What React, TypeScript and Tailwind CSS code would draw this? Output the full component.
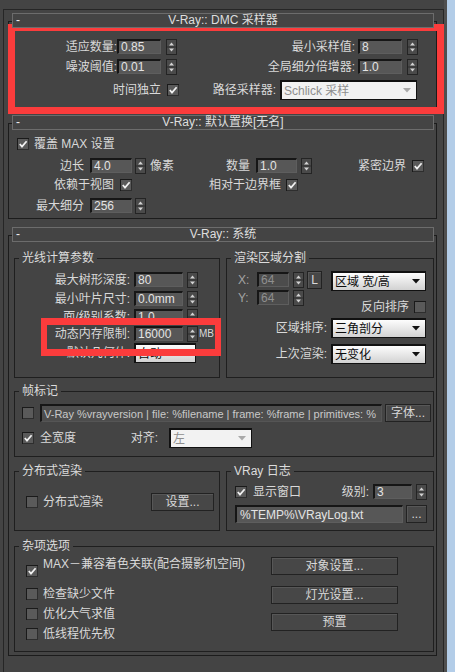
import type { ReactNode } from "react";

const FONT = "font-['Liberation_Sans','Noto_Sans_CJK_SC',sans-serif]";

function Field({
  className = "",
  value,
  dim = false,
}: {
  className?: string;
  value: string;
  dim?: boolean;
}) {
  return (
    <div
      className={`flex h-[15px] shrink-0 items-center overflow-hidden whitespace-nowrap border-t-2 border-l-2 border-r border-b border-t-[#161616] border-l-[#161616] border-r-[#5e5e5e] border-b-[#5e5e5e] pl-[2px] ${
        dim ? "bg-[#4c4c4c] text-[#8f8f8f]" : "bg-[#575757] text-[#e4e4e4]"
      } ${className}`}
    >
      {value}
    </div>
  );
}

function Spin({ className = "" }: { className?: string }) {
  return (
    <svg width="11" height="16" viewBox="0 0 11 16" className={`shrink-0 ${className}`}>
      <rect x="0.5" y="0.5" width="10" height="15" fill="#4a4a4a" stroke="#242424" />
      <line x1="1" y1="8" x2="10" y2="8" stroke="#2c2c2c" />
      <path d="M5.5 3.5 L8 6.5 L3 6.5 Z" fill="#d2d2d2" />
      <path d="M3 9.5 L8 9.5 L5.5 12.5 Z" fill="#d2d2d2" />
    </svg>
  );
}

function Check({ on = false, className = "" }: { on?: boolean; className?: string }) {
  return (
    <svg width="12" height="12" viewBox="0 0 12 12" className={`shrink-0 ${className}`}>
      <rect x="0" y="0" width="12" height="12" fill="#5a5a5a" />
      <path d="M0 0H12V1H1V12H0Z" fill="#1a1a1a" />
      <path d="M11 1H12V12H1V11H11Z" fill="#2e2e2e" />
      {on && (
        <path d="M2.8 6 L5 8.6 L9.6 3.2" stroke="#f2f2f2" strokeWidth="1.7" fill="none" />
      )}
    </svg>
  );
}

function Select({
  className = "",
  text,
  muted = false,
}: {
  className?: string;
  text: string;
  muted?: boolean;
}) {
  return (
    <div
      className={`flex h-[20px] shrink-0 items-center justify-between border-t-2 border-l-2 border-r border-b border-[#111] pl-[2px] pr-[5px] ${
        muted
          ? "bg-[#f2f2f2] text-[#8e8e8e]"
          : "bg-linear-to-b from-[#fdfdfd] to-[#d2d2d2] text-[#0c0c0c]"
      } ${className}`}
    >
      <span className="whitespace-nowrap">{text}</span>
      <svg width="8" height="5" viewBox="0 0 8 5" className="shrink-0">
        <path d="M0 0 H8 L4 4.5 Z" fill={muted ? "#a9a9a9" : "#111"} />
      </svg>
    </div>
  );
}

function Btn({ className = "", children }: { className?: string; children: ReactNode }) {
  return (
    <div
      className={`flex h-[18px] shrink-0 items-center justify-center border border-[#222] bg-[#474747] text-[#d8d8d8] shadow-[inset_1px_1px_0_#575757] ${className}`}
    >
      {children}
    </div>
  );
}

function Group({
  title,
  className = "",
  children,
}: {
  title: string;
  className?: string;
  children: ReactNode;
}) {
  return (
    <div className={`shrink-0 border border-[#1f1f1f] ${className}`}>
      <div className="-mt-[8px] ml-[4px] w-fit bg-[#444] px-[3px] leading-[14px] text-[#dcdcdc]">
        {title}
      </div>
      {children}
    </div>
  );
}

function Rollout({
  title,
  className = "",
  bodyClass,
  children,
}: {
  title: string;
  className?: string;
  bodyClass: string;
  children: ReactNode;
}) {
  return (
    <div className={className}>
      <div className="relative z-10 ml-[8px] grid h-[15px] w-[422px] grid-cols-[20px_1fr_20px] items-center border border-[#6c6c6c] bg-[#444] leading-[13px]">
        <span className="pl-[3px] text-[#f0f0f0]">-</span>
        <span className="text-center text-[#dedede]">{title}</span>
        <span />
      </div>
      <div className={`-mt-[7px] ml-[4px] w-[429px] border border-[#1c1c1c] ${bodyClass}`}>
        {children}
      </div>
    </div>
  );
}

export default function App() {
  return (
    <div
      className={`${FONT} relative flex h-[672px] w-[455px] overflow-hidden bg-[#444] text-[12px] leading-[14px] text-[#d9d9d9]`}
    >
      <div className="h-full w-[444px] shrink-0 pl-[3px] pt-[9px]">
        <div className="h-full border-t border-l border-r border-[#262626] pt-[3px]">
          {/* DMC sampler */}
          <Rollout title="V-Ray:: DMC 采样器" bodyClass="h-[87px]">
            <div className="mt-[17px] flex h-[15px] items-center">
              <span className="w-[108px] text-right">适应数量:</span>
              <Field className="w-[44px]" value="0.85" />
              <Spin className="ml-[5px]" />
              <span className="w-[178px] text-right">最小采样值:</span>
              <Field className="ml-[3px] w-[44px]" value="8" />
              <Spin className="ml-[5px]" />
            </div>
            <div className="mt-[5px] flex h-[15px] items-center">
              <span className="w-[108px] text-right">噪波阈值:</span>
              <Field className="w-[44px]" value="0.01" />
              <Spin className="ml-[5px]" />
              <span className="w-[178px] text-right">全局细分倍增器:</span>
              <Field className="ml-[3px] w-[44px]" value="1.0" />
              <Spin className="ml-[5px]" />
            </div>
            <div className="mt-[6px] flex h-[20px] items-center">
              <span className="w-[152px] text-right">时间独立</span>
              <Check on className="ml-[6px]" />
              <span className="w-[97px] text-right">路径采样器:</span>
              <Select className="ml-[4px] w-[137px]" muted text="Schlick 采样" />
            </div>
          </Rollout>

          {/* displacement */}
          <Rollout title="V-Ray:: 默认置换[无名]" className="mt-[7px]" bodyClass="h-[96px]">
            <div className="mt-[14px] flex h-[12px] items-center">
              <Check on className="ml-[8px]" />
              <span className="ml-[5px]">覆盖 MAX 设置</span>
            </div>
            <div className="mt-[8px] flex h-[15px] items-center">
              <span className="w-[75px] text-right">边长</span>
              <Field className="ml-[6px] w-[42px]" value="4.0" />
              <Spin className="ml-[3px]" />
              <span className="ml-[4px] w-[24px]">像素</span>
              <span className="w-[76px] text-right">数量</span>
              <Field className="ml-[6px] w-[41px]" value="1.0" />
              <Spin className="ml-[4px]" />
              <span className="w-[94px] text-right">紧密边界</span>
              <Check on className="ml-[6px]" />
            </div>
            <div className="mt-[6px] flex h-[12px] items-center">
              <span className="w-[105px] text-right">依赖于视图</span>
              <Check on className="ml-[6px]" />
              <span className="w-[149px] text-right">相对于边界框</span>
              <Check on className="ml-[5px]" />
            </div>
            <div className="mt-[7px] flex h-[15px] items-center">
              <span className="w-[75px] text-right">最大细分</span>
              <Field className="ml-[6px] w-[42px]" value="256" />
              <Spin className="ml-[3px]" />
            </div>
          </Rollout>

          {/* system */}
          <Rollout title="V-Ray:: 系统" className="mt-[8px]" bodyClass="h-[421px]">
            <div className="mt-[22px] flex items-start">
              <Group title="光线计算参数" className="ml-[5px] h-[120px] w-[206px]">
                {[
                  ["最大树形深度:", "80", "mt-[7px]"],
                  ["最小叶片尺寸:", "0.0mm", "mt-[4px]"],
                  ["面/级别系数:", "1.0", "mt-[3px]"],
                  ["动态内存限制:", "16000", "mt-[2px]"],
                ].map(([label, value, gap]) => (
                  <div key={label} className={`${gap} flex h-[15px] items-center`}>
                    <span className="w-[115px] text-right">{label}</span>
                    <Field className="ml-[4px] w-[49px]" value={value} />
                    <Spin className="ml-[4px]" />
                    {value === "16000" && <span className="ml-[1px] text-[10px]">MB</span>}
                  </div>
                ))}
                <div className="mt-[2px] flex h-[20px] items-center">
                  <span className="w-[115px] text-right">默认几何体:</span>
                  <Select className="ml-[4px] w-[62px]" text="自动" />
                </div>
              </Group>

              <Group title="渲染区域分割" className="ml-[6px] h-[120px] w-[208px]">
                <div className="mt-[6px] flex items-start">
                  <div className="w-[95px]">
                    <div className="mt-[1px] flex h-[15px] items-center">
                      <span className="w-[30px] pl-[11px] text-[#a3a3a3]">X:</span>
                      <Field dim className="w-[32px]" value="64" />
                      <Spin className="ml-[4px]" />
                      <Btn className="ml-[3px] h-[16px] w-[15px] text-[#bdbdbd]">L</Btn>
                    </div>
                    <div className="mt-[3px] flex h-[15px] items-center">
                      <span className="w-[30px] pl-[11px] text-[#a3a3a3]">Y:</span>
                      <Field dim className="w-[32px]" value="64" />
                      <Spin className="ml-[4px]" />
                    </div>
                  </div>
                  <div className="ml-[9px] w-[95px]">
                    <Select className="w-[95px]" text="区域 宽/高" />
                    <div className="mt-[10px] flex h-[12px] items-center justify-end">
                      <span>反向排序</span>
                      <Check className="ml-[5px]" />
                    </div>
                  </div>
                </div>
                <div className="mt-[5px] flex h-[20px] items-center">
                  <span className="w-[100px] text-right">区域排序:</span>
                  <Select className="ml-[4px] w-[95px]" text="三角剖分" />
                </div>
                <div className="mt-[6px] flex h-[20px] items-center">
                  <span className="w-[100px] text-right">上次渲染:</span>
                  <Select className="ml-[4px] w-[95px]" text="无变化" />
                </div>
              </Group>
            </div>

            <Group title="帧标记" className="mt-[13px] ml-[5px] h-[66px] w-[420px]">
              <div className="mt-[6px] flex h-[18px] items-center">
                <Check className="ml-[7px]" />
                <div className="ml-[6px] flex h-[18px] w-[342px] items-center overflow-hidden whitespace-nowrap border-t-2 border-l-2 border-r border-b border-t-[#161616] border-l-[#161616] border-r-[#555] border-b-[#555] bg-[#4d4d4d] pl-[2px] text-[11px] text-[#c9c9c9]">
                  V-Ray %vrayversion | file: %filename | frame: %frame | primitives: %
                </div>
                <Btn className="ml-[3px] w-[46px]">字体...</Btn>
              </div>
              <div className="mt-[6px] flex h-[20px] items-center">
                <Check on className="ml-[7px]" />
                <span className="ml-[6px] w-[36px]">全宽度</span>
                <span className="w-[82px] text-right">对齐:</span>
                <Select className="ml-[11px] w-[83px]" muted text="左" />
              </div>
            </Group>

            <div className="mt-[14px] flex items-start">
              <Group title="分布式渲染" className="ml-[5px] h-[60px] w-[206px]">
                <div className="mt-[15px] flex h-[18px] items-center">
                  <Check className="ml-[11px]" />
                  <span className="ml-[5px] w-[60px]">分布式渲染</span>
                  <Btn className="ml-[48px] w-[63px]">设置...</Btn>
                </div>
              </Group>
              <Group title="VRay 日志" className="ml-[6px] h-[60px] w-[208px]">
                <div className="mt-[6px] flex h-[15px] items-center">
                  <Check on className="ml-[8px]" />
                  <span className="ml-[6px] w-[48px]">显示窗口</span>
                  <span className="w-[68px] text-right">级别:</span>
                  <Field className="ml-[4px] w-[39px]" value="3" />
                  <Spin className="ml-[4px]" />
                </div>
                <div className="mt-[6px] flex h-[18px] items-center">
                  <Field className="ml-[8px] !h-[18px] w-[168px] pl-[3px]" value="%TEMP%\VRayLog.txt" />
                  <Btn className="ml-[3px] w-[21px]">...</Btn>
                </div>
              </Group>
            </div>

            <Group title="杂项选项" className="mt-[15px] ml-[5px] h-[106px] w-[420px]">
              <div className="flex items-start">
                <div className="w-[256px]">
                  <div className="mt-[4px] flex items-start">
                    <Check on className="ml-[11px] mt-[8px]" />
                    <span className="ml-[5px] whitespace-nowrap">MAX－兼容着色关联(配合摄影机空间)</span>
                  </div>
                  {[
                    ["检查缺少文件", "mt-[11px]"],
                    ["优化大气求值", "mt-[8px]"],
                    ["低线程优先权", "mt-[8px]"],
                  ].map(([label, gap]) => (
                    <div key={label} className={`${gap} flex h-[12px] items-center`}>
                      <Check className="ml-[11px]" />
                      <span className="ml-[5px]">{label}</span>
                    </div>
                  ))}
                </div>
                <div>
                  <Btn className="mt-[4px] w-[127px]">对象设置...</Btn>
                  <Btn className="mt-[11px] w-[127px]">灯光设置...</Btn>
                  <Btn className="mt-[9px] w-[127px]">预置</Btn>
                </div>
              </div>
            </Group>
          </Rollout>
        </div>
      </div>
      <div className="h-full w-[3px] shrink-0 bg-[#4f4f4f]" />
      <div className="h-full w-[8px] shrink-0 bg-[#b3cde8]" />

      {/* highlight frames */}
      <div className="pointer-events-none absolute left-[8px] top-[24px] h-[90px] w-[436px] border-[7px] border-[#fb3c3c]" />
      <div className="pointer-events-none absolute left-[41px] top-[318px] h-[38px] w-[180px] border-y-[7px] border-x-[6px] border-[#fb3c3c]" />
    </div>
  );
}
